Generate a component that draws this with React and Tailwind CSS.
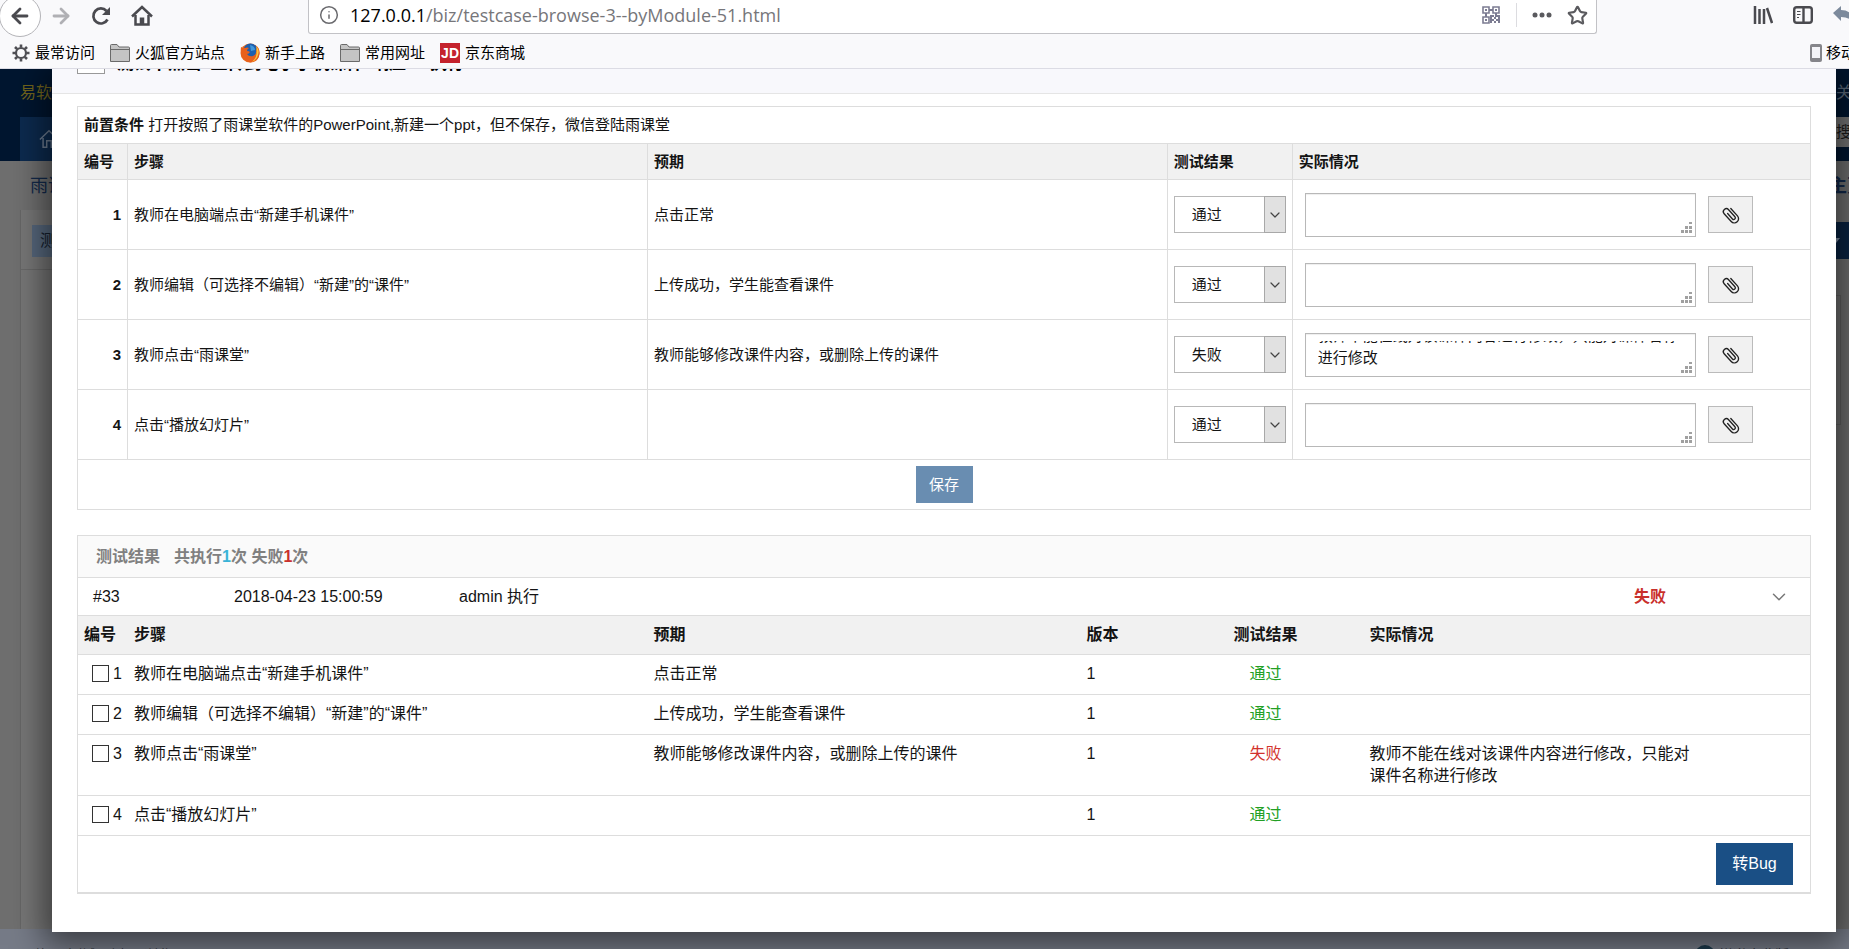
import { useEffect, useRef } from "react";
import { ArrowLeft, ArrowRight, Info, Star, ChevronDown } from "lucide-react";

const steps = [
  { id: 1, desc: "教师在电脑端点击“新建手机课件”", expect: "点击正常", result: "通过", real: "" },
  { id: 2, desc: "教师编辑（可选择不编辑）“新建”的“课件”", expect: "上传成功，学生能查看课件", result: "通过", real: "" },
  {
    id: 3,
    desc: "教师点击“雨课堂”",
    expect: "教师能够修改课件内容，或删除上传的课件",
    result: "失败",
    real: "教师不能在线对该课件内容进行修改，只能对课件名称进行修改",
  },
  { id: 4, desc: "点击“播放幻灯片”", expect: "", result: "通过", real: "" },
];

function Folder() {
  return (
    <svg width="20" height="18" viewBox="0 0 20 18" fill="#c4c4c4" stroke="#6a6a6a">
      <path d="M.5 17.500V1.500Q.5.500 1.500.500H7l2 2.500h9.500q1 0 1 1V17.500Z" />
      <path d="M1 5.500H19" />
    </svg>
  );
}

function Firefox() {
  return (
    <svg width="20" height="20" viewBox="0 0 20 20">
      <circle cx="10" cy="10" r="9.500" fill="#e8691c" />
      <circle cx="10.500" cy="7.500" r="7" fill="#1d5fae" />
      <path d="M10 2q5 1 5 5l-4 1z" fill="#3f97da" />
      <path d="M1 4q2 1 4 1 2-1 4 0-2 1-2 3 2 0 3 1-1 2-3 2 2 3 6 2 4-2 3-6 2-3 0-4 4 2 3.500 8-1 8-9 8.500Q-1 18 1 4Z" fill="#e8601c" />
      <path d="M16 3q4 4 2 9-1 5-6 7 5-5 4.500-9Q17 7 16 3Z" fill="#fbc33a" />
    </svg>
  );
}

function Gear() {
  return (
    <svg width="18" height="18" viewBox="0 0 18 18" fill="none" stroke="#4f4f54">
      <circle cx="9" cy="9" r="5" strokeWidth="2.200" />
      <path
        d="M9 .5v3M9 14.500v3M.5 9h3M14.500 9h3M3 3l2.200 2.200M12.800 12.800 15 15M15 3l-2.200 2.200M5.200 12.800 3 15"
        strokeWidth="2.600"
      />
    </svg>
  );
}

function Reload() {
  return (
    <svg width="20" height="20" viewBox="0 0 20 20" fill="none" stroke="#4a4a4f" strokeWidth="2.700">
      <path d="M16.500 13.500A7.500 7.500 0 1 1 15.500 5" />
      <path d="M19 1v8h-8Z" fill="#4a4a4f" stroke="none" />
    </svg>
  );
}

function HomeIcon() {
  return (
    <svg width="22" height="22" viewBox="0 0 22 22" fill="none" stroke="#4a4a4f" strokeWidth="2.500">
      <path d="M1 11.500 11 2l10 9.500" />
      <path d="M4.500 10v9.500h13V10" />
      <path d="M11 12.500v7" strokeWidth="4.500" />
    </svg>
  );
}

function QrIcon() {
  return (
    <svg className="shrink-0" width="18" height="18" viewBox="0 0 18 18" fill="none" stroke="#7c7c92" strokeWidth="1.600">
      <path d="M1 1h6v6H1zM11 1h6v6h-6zM1 11h6v6H1z" />
      <path d="M3 4h2M13 4h2M3 14h2M7 4h4M4 7v4M14 7v4M9 9v8M10 10h2M12 12h2M14 10h4M10 14h2M14 14h4M12 16h2M16 12h2M16 16h2" strokeWidth="2" />
    </svg>
  );
}

function Bookmark({ icon, children }) {
  return (
    <a href="#" className="flex items-center gap-[5px] text-black">
      {icon}
      {children}
    </a>
  );
}

function Toolbar() {
  return (
    <header className="relative z-20 h-[69px] shrink-0 overflow-hidden border-b border-[#dcdce4] bg-[#f9f9fb] text-[15px]">
      <div className="flex h-[34px] items-start">
        <nav className="flex h-[31px] w-[308px] shrink-0 items-center text-[#4a4a4f]">
          <button aria-label="后退" className="-ml-px flex size-[42px] shrink-0 items-center justify-center rounded-full border border-[#b4b4b8] bg-white">
            <ArrowLeft size={24} strokeWidth={2.8} />
          </button>
          <button aria-label="前进" className="ml-2 text-[#b0b0b4]">
            <ArrowRight size={24} strokeWidth={2.8} />
          </button>
          <button aria-label="刷新" className="ml-[18px]">
            <Reload />
          </button>
          <button aria-label="主页" className="ml-5">
            <HomeIcon />
          </button>
        </nav>
        <div className="flex h-[34px] min-w-0 flex-1 items-center rounded-b-[3px] border border-t-0 border-[#c2c2c6] bg-white pr-2 pb-[3px] pl-[10px]">
          <Info size={20} strokeWidth={1.8} className="text-[#6a6a6e]" />
          <p className="ml-[11px] flex-1 font-['Open_Sans','Noto_Sans',sans-serif] text-lg text-[#76767a]">
            <span className="text-black">127.0.0.1</span>/biz/testcase-browse-3--byModule-51.html
          </p>
          <QrIcon />
          <span className="mr-[15px] ml-4 h-6 w-px bg-[#dcdce0]" />
          <svg width="20" height="6" viewBox="0 0 20 6" fill="#5a5a5e">
            <circle cx="3" cy="3" r="2.500" />
            <circle cx="10" cy="3" r="2.500" />
            <circle cx="17" cy="3" r="2.500" />
          </svg>
          <Star size={21} strokeWidth={2.5} className="ml-[15px] text-[#5a5a5e]" />
        </div>
        <div className="flex h-[30px] w-[252px] shrink-0 items-center pl-[156px] text-[#4a4a4f]">
          <svg className="shrink-0" width="20" height="18" viewBox="0 0 20 18" fill="none" stroke="currentColor" strokeWidth="2.500">
            <path d="M2 0v18M6.500 3v15M11 3v15M14 2l5 15" />
          </svg>
          <svg className="ml-5 shrink-0" width="20" height="18" viewBox="0 0 20 18" fill="none" stroke="currentColor" strokeWidth="2.400">
            <rect x="1.200" y="1.200" width="17.600" height="15.600" rx="2.500" />
            <path d="M10.500 1v16" />
            <path d="M4 5.500h3.500M4 8.500h3.500M4 11.500h2" strokeWidth="1.200" />
          </svg>
          <svg className="ml-5 shrink-0" width="22" height="18" viewBox="0 0 22 18" fill="#7c8a9c">
            <path d="M0 7 8 0v4q12 0 12 13-3-6-12-6v4Z" />
          </svg>
        </div>
      </div>
      <div className="flex h-[38px] items-center gap-[15px] pl-3">
        <Bookmark icon={<Gear />}>最常访问</Bookmark>
        <Bookmark icon={<Folder />}>火狐官方站点</Bookmark>
        <Bookmark icon={<Firefox />}>新手上路</Bookmark>
        <Bookmark icon={<Folder />}>常用网址</Bookmark>
        <Bookmark
          icon={
            <span className="flex size-5 items-center justify-center bg-[#c4222c] font-['Liberation_Sans',sans-serif] text-sm font-bold text-white">JD</span>
          }
        >
          京东商城
        </Bookmark>
        <a href="#" className="-mr-[22px] ml-auto flex items-center gap-1 whitespace-nowrap text-black">
          <svg width="12" height="18" viewBox="0 0 12 18">
            <rect width="12" height="18" rx="2" fill="#85858a" />
            <rect x="2" y="3" width="8" height="11" fill="#f4f4f8" />
          </svg>
          移动版
        </a>
      </div>
    </header>
  );
}

// Page that stays dimmed under the dialog
function Backdrop() {
  return (
    <div className="flex h-full flex-col overflow-hidden bg-[#6f6f6f] text-base whitespace-nowrap">
      <div className="flex h-[92px] shrink-0 flex-col justify-between bg-[#001630]">
        <div className="flex h-[48px] items-center justify-between pl-5 text-[#73661c]">
          易软天创
          <span className="w-[13px] text-[#5d6b7c]">关于</span>
        </div>
        <div className="flex h-[44px] items-start justify-between pl-5">
          <div className="flex h-full w-40 items-center bg-[#0c2a4e] pl-[19px] text-[#6d7c90]">
            <svg width="20" height="20" viewBox="0 0 22 22" fill="none" stroke="currentColor" strokeWidth="1.600">
              <path d="M1 11.500 11 2l10 9.500M4.500 10v10h4v-7h5v7h4V10" />
            </svg>
          </div>
          <span className="h-[30px] w-[13px] bg-[#757575] text-[15px] leading-[30px] text-[#1a1a1a]">搜索</span>
        </div>
      </div>
      <div className="flex h-[49px] shrink-0 items-center justify-between pl-[30px] text-lg text-[#12294a]">
        雨课堂
        <span className="w-5 font-bold">主页</span>
      </div>
      <div className="flex flex-1 justify-between pl-5">
        <div className="w-60 border-l border-[#666] bg-[#767676]">
          <div className="h-[60px] border-b border-[#686868] pt-[15px] pl-[11px]">
            <div className="h-8 bg-[#56677c] pl-2 leading-8 text-[#14202e]">测试</div>
          </div>
        </div>
        <div className="w-[17px]">
          <div className="mt-3 flex h-[37px] items-center bg-[#0a2342]">
            <svg width="8" height="5" viewBox="0 0 8 5" fill="#7d8ba0">
              <path d="M0 0h8L4 5Z" />
            </svg>
          </div>
          <div className="mt-9 mr-2 h-[130px] border-y border-r border-[#606060]" />
        </div>
      </div>
      <div className="flex h-5 shrink-0 items-start justify-between overflow-hidden bg-[#767b87] pt-4 pr-[60px] pl-5 text-sm text-[#22262e]">
        <span className="flex gap-5">
          <span>易软</span>
          <span>测试用例</span>
          <span>浏览</span>
        </span>
        <span className="flex items-start gap-1">
          <span className="size-5 rounded-full bg-[#1d3a4c]" />
          禅道企业版
        </span>
      </div>
    </div>
  );
}

function PaperclipIcon() {
  return (
    <svg width="20" height="20" viewBox="0 0 18 18" fill="none" stroke="#222" strokeWidth="1.200" strokeLinecap="round">
      <path
        transform="rotate(-42 9 9)"
        d="M12.800 4.500v9a3.800 3.800 0 0 1-7.600 0v-9.500a2.700 2.700 0 0 1 5.400 0v8.500a1.500 1.500 0 0 1-3 0V6"
      />
    </svg>
  );
}

function ResizeGrip() {
  return (
    <svg className="pointer-events-none absolute right-[3px] bottom-[3px]" width="11" height="11" viewBox="0 0 11 11" fill="#a0a0a0">
      <path d="M8 0h3v2H8zM8 4h3v3H8zM4 4h3v3H4zM8 8h3v3H8zM4 8h3v3H4zM0 8h3v3H0z" />
    </svg>
  );
}

function RealInput({ step }) {
  const ref = useRef(null);

  // keep the end of a long note in view
  useEffect(() => {
    ref.current.scrollTop = ref.current.scrollHeight;
  }, []);

  return (
    <div className="relative flex h-11 flex-1 border border-[#b8b8b8] bg-white px-3 py-[7px] shadow-[inset_0_1px_1px_#eee]">
      <textarea
        ref={ref}
        aria-label={`实际情况 ${step.id}`}
        defaultValue={step.real}
        className="h-7 w-full resize-none overflow-hidden leading-[22px] outline-none"
      />
      <ResizeGrip />
    </div>
  );
}

function ResultSelect({ step }) {
  return (
    <div className="relative flex">
      <select
        aria-label={`测试结果 ${step.id}`}
        defaultValue={step.result}
        className="h-[37px] w-full appearance-none border border-[#b8b8b8] bg-white pl-[17px]"
      >
        <option>通过</option>
        <option>失败</option>
      </select>
      <span className="pointer-events-none absolute inset-y-0 right-0 flex w-[22px] items-center justify-center border border-[#a8a8a8] bg-[#e1e1e1]">
        <ChevronDown size={16} strokeWidth={1.8} className="shrink-0 text-[#444]" />
      </span>
    </div>
  );
}

function RunTable() {
  return (
    <table className="w-full table-fixed border-collapse border border-[#ddd] text-[15px] leading-[22px] [&_td]:border-[#ddd] [&_td]:px-[6px] [&_th]:border-[#ddd] [&_th]:px-[6px]">
      <colgroup>
        <col className="w-[50px]" />
        <col className="w-[30%]" />
        <col className="w-[30%]" />
        <col className="w-[125px]" />
        <col />
      </colgroup>
      <thead>
        <tr className="h-[37px] border-b border-[#ddd]">
          <td colSpan={5}>
            <strong>前置条件</strong> 打开按照了雨课堂软件的PowerPoint,新建一个ppt，但不保存，微信登陆雨课堂
          </td>
        </tr>
        <tr className="h-9 border-b border-[#ddd] bg-[#f1f1f1] text-left">
          <th className="border-r">编号</th>
          <th className="border-r">步骤</th>
          <th className="border-r">预期</th>
          <th className="border-r">测试结果</th>
          <th>实际情况</th>
        </tr>
      </thead>
      <tbody>
        {steps.map((s) => (
          <tr key={s.id} className="h-[70px] border-b border-[#ddd]">
            <th className="border-r text-right">{s.id}</th>
            <td className="border-r">{s.desc}</td>
            <td className="border-r">{s.expect}</td>
            <td className="border-r">
              <ResultSelect step={s} />
            </td>
            <td>
              <div className="flex items-center gap-3 pr-[51px] pl-[6px]">
                <RealInput step={s} />
                <button aria-label="附件" className="flex h-[37px] w-[45px] items-center justify-center border border-[#bbb] bg-[#f1f1f1]">
                  <PaperclipIcon />
                </button>
              </div>
            </td>
          </tr>
        ))}
      </tbody>
      <tfoot>
        <tr className="h-[50px]">
          <td colSpan={5} className="text-center">
            <button className="h-[37px] w-[57px] bg-[#698db1] align-middle text-white">保存</button>
          </td>
        </tr>
      </tfoot>
    </table>
  );
}

function ResultPanel() {
  return (
    <section className="mt-[25px] border border-b-2 border-[#ddd] text-base leading-[22px]">
      <h2 className="flex h-[42px] items-center border-b border-[#ddd] bg-[#fafafa] pl-[18px] font-bold text-[#808080]">
        测试结果
        <span className="ml-[14px]">
          共执行<span className="text-[#39b3d7]">1</span>次 失败<span className="text-[#c9302c]">1</span>次
        </span>
      </h2>
      <div className="flex h-[38px] items-center border-b border-[#ddd] pr-[20px] pl-[15px]">
        <span className="w-[141px]">#33</span>
        <span className="w-[225px]">2018-04-23 15:00:59</span>
        <span className="flex-1">admin 执行</span>
        <span className="mr-[102px] font-bold text-[#c9302c]">失败</span>
        <ChevronDown size={22} strokeWidth={1.6} className="text-[#777]" />
      </div>
      <table className="w-full table-fixed border-collapse text-left [&_td]:px-[6px] [&_td]:py-2 [&_th]:px-[6px]">
        <colgroup>
          <col className="w-[50px]" />
          <col className="w-[30%]" />
          <col className="w-[25%]" />
          <col className="w-[113px]" />
          <col className="w-[144px]" />
          <col />
          <col className="w-[110px]" />
        </colgroup>
        <thead>
          <tr className="h-[38px] border-b border-[#ddd] bg-[#f1f1f1]">
            <th>编号</th>
            <th>步骤</th>
            <th>预期</th>
            <th>版本</th>
            <th className="text-center">测试结果</th>
            <th className="pl-8!">实际情况</th>
            <th />
          </tr>
        </thead>
        <tbody>
          {steps.map((s) => (
            <tr key={s.id} className="h-10 border-b border-[#ddd] align-top">
              <td className="whitespace-nowrap">
                <label className="flex items-center justify-end gap-1">
                  <input type="checkbox" className="size-[17px] appearance-none border border-[#333] bg-white" />
                  {s.id}
                </label>
              </td>
              <td>{s.desc}</td>
              <td>{s.expect}</td>
              <td>1</td>
              <td className={s.result === "通过" ? "text-center text-[#229f24]" : "text-center text-[#d2322d]"}>{s.result}</td>
              <td className="pr-0! pl-8!">{s.real}</td>
              <td />
            </tr>
          ))}
        </tbody>
      </table>
      <div className="flex h-14 items-center justify-end pr-[17px]">
        <button className="h-[42px] w-[77px] bg-[#1a4f85] text-white">转Bug</button>
      </div>
    </section>
  );
}

export default function App() {
  return (
    <div className="flex h-screen flex-col overflow-hidden font-['Liberation_Sans','Noto_Sans_CJK_SC',sans-serif] text-[#141414]">
      <Toolbar />
      <div className="relative min-h-0 flex-1 overflow-hidden">
        <Backdrop />
        <div role="dialog" aria-label="执行" className="absolute inset-x-0 top-0 mr-[13px] ml-[52px] bg-white shadow-[0_5px_30px_8px_rgba(0,0,0,0.5)]">
          <div className="flex h-[25px] items-end overflow-hidden border-b border-[#e5e5e5] bg-[#f8f8fc] px-[25px]">
            <div className="mb-[19px] flex items-end gap-3">
              <span className="h-7 w-7 border border-[#999] bg-white" />
              <h1 className="flex gap-6 text-[17px] leading-5 font-bold text-black">
                <span>测试下点击“上传到电子手机课件”响应</span>
                <span>执行</span>
              </h1>
            </div>
          </div>
          <main className="px-[25px] pt-3 pb-[38px]">
            <RunTable />
            <ResultPanel />
          </main>
        </div>
      </div>
    </div>
  );
}
